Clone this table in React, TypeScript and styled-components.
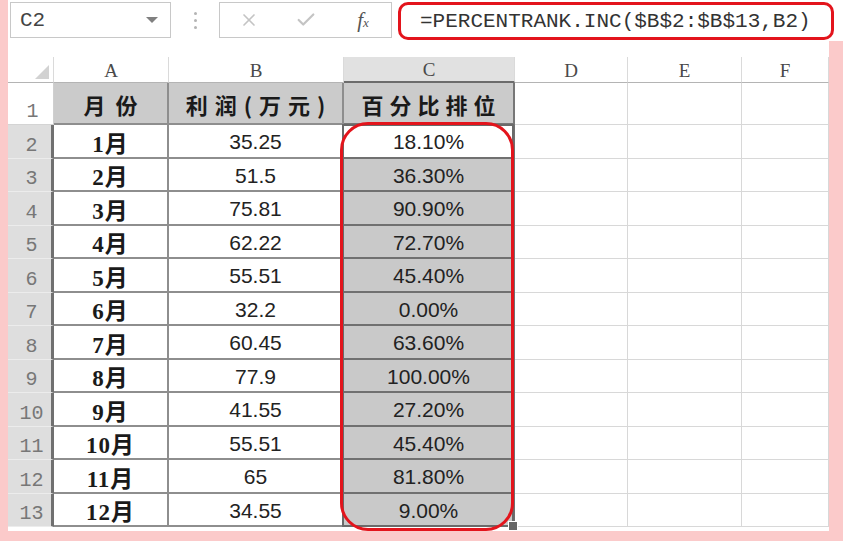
import styled, { createGlobalStyle } from "styled-components";
import { X, Check } from "lucide-react";

const GlobalStyle = createGlobalStyle`
  html, body {
    margin: 0;
    padding: 0;
    background: #fbcaca;
  }
  * {
    box-sizing: border-box;
  }
`;

const colWidths = [46, 115, 175, 171, 113, 114, 87];
const headerH = 26;
const titleH = 42;
const rowH = 33.5;

const data = [
  { month: "1月", profit: "35.25", rank: "18.10%" },
  { month: "2月", profit: "51.5", rank: "36.30%" },
  { month: "3月", profit: "75.81", rank: "90.90%" },
  { month: "4月", profit: "62.22", rank: "72.70%" },
  { month: "5月", profit: "55.51", rank: "45.40%" },
  { month: "6月", profit: "32.2", rank: "0.00%" },
  { month: "7月", profit: "60.45", rank: "63.60%" },
  { month: "8月", profit: "77.9", rank: "100.00%" },
  { month: "9月", profit: "41.55", rank: "27.20%" },
  { month: "10月", profit: "55.51", rank: "45.40%" },
  { month: "11月", profit: "65", rank: "81.80%" },
  { month: "12月", profit: "34.55", rank: "9.00%" },
];

const Page = styled.div`
  width: 843px;
  height: 541px;
  padding-left: 8px;
  background: #fbcaca;
  display: flex;
  flex-direction: column;
  overflow: hidden;
`;

const Toolbar = styled.div`
  width: 835px;
  height: 41px;
  background: #fff;
  display: flex;
  align-items: flex-start;
  padding-top: 2px;
`;

const NameBox = styled.div`
  margin-left: 2px;
  width: 161px;
  height: 36px;
  border: 1px solid #c8c8c8;
  display: flex;
  align-items: center;
  justify-content: space-between;
  padding: 0 12px 0 9px;
  font-family: "Liberation Mono", monospace;
  font-size: 21px;
  color: #444;
`;

const Caret = styled.span`
  width: 0;
  height: 0;
  border-left: 6px solid transparent;
  border-right: 6px solid transparent;
  border-top: 6px solid #808080;
`;

const Dots = styled.div`
  width: 48px;
  height: 36px;
  display: flex;
  flex-direction: column;
  align-items: center;
  justify-content: center;
  gap: 4px;
`;

const Dot = styled.span`
  width: 3px;
  height: 3px;
  border-radius: 50%;
  background: #b4b4b4;
`;

const FxBox = styled.div`
  width: 173px;
  height: 36px;
  border: 1px solid #c8c8c8;
  display: flex;
  align-items: center;
  padding-left: 18px;
  gap: 35px;
`;

const IconSlot = styled.span`
  width: 22px;
  display: flex;
  align-items: center;
  justify-content: center;
  color: #c4c4c4;
`;

const Fx = styled.span`
  width: 22px;
  font-family: "Liberation Serif", serif;
  font-style: italic;
  font-size: 21px;
  color: #555;
  text-align: center;
  sub {
    font-size: 13px;
    vertical-align: baseline;
  }
`;

const FormulaBox = styled.div`
  margin-left: 6px;
  width: 436px;
  height: 38px;
  border: 3px solid #e3141c;
  border-radius: 10px;
  display: flex;
  align-items: center;
  padding-left: 19px;
  font-family: "Liberation Mono", monospace;
  font-size: 21px;
  color: #333;
  white-space: nowrap;
`;

const SheetArea = styled.div`
  width: 821px;
  background: #fff;
  padding-top: 16px;
  padding-bottom: 4px;
`;

const Grid = styled.div`
  position: relative;
  display: grid;
  grid-template-columns: ${colWidths.map((w) => `${w}px`).join(" ")};
  grid-template-rows: ${headerH}px ${titleH}px repeat(12, ${rowH}px);
`;

const Corner = styled.div`
  position: relative;
  border-right: 1px solid #dadada;
  border-bottom: 1px solid #b4b4b4;
  &::after {
    content: "";
    position: absolute;
    right: 4px;
    bottom: 3px;
    width: 14px;
    height: 14px;
    background: #d2d2d2;
    clip-path: polygon(100% 0, 100% 100%, 0 100%);
  }
`;

const ColHead = styled.div<{ $active?: boolean }>`
  display: flex;
  align-items: center;
  justify-content: center;
  background: ${(p) => (p.$active ? "#e1e1e1" : "#fff")};
  border-right: 1px solid #dadada;
  border-bottom: ${(p) => (p.$active ? "2px solid #6c6c6c" : "1px solid #b4b4b4")};
  font-family: "Liberation Serif", serif;
  font-size: 19px;
  color: #4a4a4a;
  padding-top: 2px;
`;

const RowHead = styled.div<{ $active?: boolean }>`
  display: flex;
  align-items: flex-end;
  justify-content: center;
  padding: 0 0 1px 4px;
  background: ${(p) => (p.$active ? "#dedede" : "#fff")};
  border-right: ${(p) => (p.$active ? "3px solid #707070" : "1px solid #cfcfcf")};
  border-bottom: 1px solid ${(p) => (p.$active ? "#ececec" : "#d4d4d4")};
  font-family: "Liberation Mono", monospace;
  font-size: 20px;
  color: #777;
`;

const TableCell = styled.div<{ $fill?: string; $line?: string }>`
  display: flex;
  align-items: center;
  justify-content: center;
  background: ${(p) => p.$fill ?? "#fff"};
  border-right: 2px solid ${(p) => p.$line ?? "#8e8e8e"};
  border-bottom: 2px solid ${(p) => p.$line ?? "#8e8e8e"};
  color: #1a1a1a;
`;

const Title = styled(TableCell)<{ $ls: number }>`
  font-family: "Noto Sans CJK SC", sans-serif;
  font-weight: 700;
  font-size: 22px;
  letter-spacing: ${(p) => p.$ls}px;
  padding-left: ${(p) => p.$ls}px;
  padding-top: 2px;
`;

const Month = styled(TableCell)`
  font-family: "Liberation Serif", "Noto Sans CJK SC", serif;
  font-weight: 700;
  font-size: 23px;
  letter-spacing: 1px;
  padding-top: 2px;
`;

const Num = styled(TableCell)`
  font-family: "Liberation Sans", Arial, sans-serif;
  font-size: 21px;
  color: #222;
  padding-top: 3px;
`;

const Blank = styled.div`
  border-right: 1px solid #d8d8d8;
  border-bottom: 1px solid #d8d8d8;
`;

const Selection = styled.div`
  position: absolute;
  border: 2px solid #6a6a6a;
  pointer-events: none;
  &::after {
    content: "";
    position: absolute;
    right: -6px;
    bottom: -6px;
    width: 8px;
    height: 8px;
    background: #666;
    border: 1px solid #fff;
  }
`;

const Highlight = styled.div`
  position: absolute;
  border: 3px solid #e3141c;
  border-radius: 28px;
  pointer-events: none;
`;

const colLetters = ["A", "B", "C", "D", "E", "F"];

export default function App() {
  const selLeft = colWidths[0] + colWidths[1] + colWidths[2];
  const selTop = headerH + titleH;
  const selHeight = rowH * 12;

  return (
    <>
      <GlobalStyle />
      <Page>
        <Toolbar>
          <NameBox>
            C2
            <Caret />
          </NameBox>
          <Dots>
            <Dot />
            <Dot />
            <Dot />
          </Dots>
          <FxBox>
            <IconSlot>
              <X size={20} strokeWidth={2} />
            </IconSlot>
            <IconSlot>
              <Check size={22} strokeWidth={2.4} />
            </IconSlot>
            <Fx>
              f<sub>x</sub>
            </Fx>
          </FxBox>
          <FormulaBox>=PERCENTRANK.INC($B$2:$B$13,B2)</FormulaBox>
        </Toolbar>
        <SheetArea>
          <Grid>
            <Corner />
            {colLetters.map((c) => (
              <ColHead key={c} $active={c === "C"}>
                {c}
              </ColHead>
            ))}

            <RowHead>1</RowHead>
            <Title $fill="#cbcbcb" $ls={10}>月份</Title>
            <Title $fill="#cbcbcb" $ls={7}>利润(万元)</Title>
            <Title $fill="#cbcbcb" $ls={6} $line="#777">百分比排位</Title>
            <Blank />
            <Blank />
            <Blank />

            {data.map((row, i) => (
              <>
                <RowHead key={`h${i}`} $active>
                  {i + 2}
                </RowHead>
                <Month key={`a${i}`}>{row.month}</Month>
                <Num key={`b${i}`}>{row.profit}</Num>
                <Num key={`c${i}`} $fill={i === 0 ? "#fff" : "#c9c9c9"} $line="#707070">
                  {row.rank}
                </Num>
                <Blank key={`d${i}`} />
                <Blank key={`e${i}`} />
                <Blank key={`f${i}`} />
              </>
            ))}

            <Selection
              style={{ left: selLeft - 2, top: selTop - 1, width: colWidths[3] + 1, height: selHeight + 1 }}
            />
            <Highlight
              style={{ left: selLeft - 4, top: selTop - 3, width: colWidths[3] + 3, height: selHeight + 7 }}
            />
          </Grid>
        </SheetArea>
      </Page>
    </>
  );
}
